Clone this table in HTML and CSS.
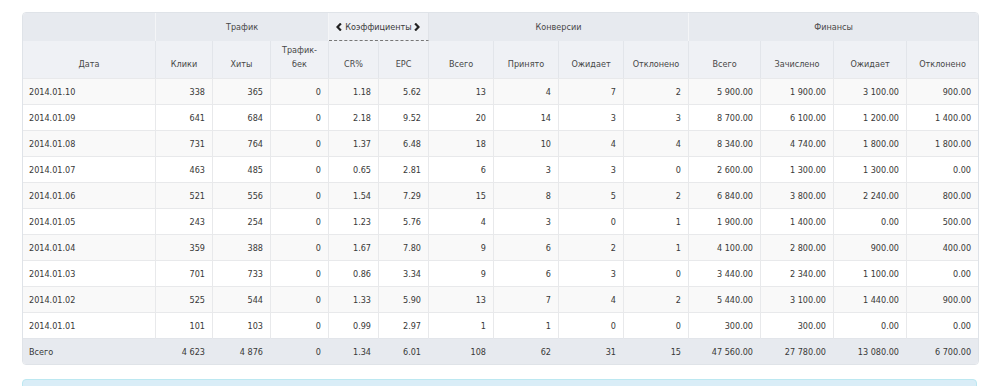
FILE: index.html
```html
<!DOCTYPE html>
<html lang="ru">
<head>
<meta charset="utf-8">
<title>Статистика</title>
<link rel="stylesheet" href="styles.css">
</head>
<body>
<div class="wrap">
<table class="stats">
<colgroup>
<col style="width:133px"><col style="width:57px"><col style="width:58px"><col style="width:58px">
<col style="width:50px"><col style="width:50px">
<col style="width:65px"><col style="width:65px"><col style="width:65px"><col style="width:65px">
<col style="width:72px"><col style="width:73px"><col style="width:73px"><col style="width:71px">
</colgroup>
<thead>
<tr class="group">
<th class="gl"></th>
<th colspan="3" class="gl">Трафик</th>
<th colspan="2" class="gl koef"><svg class="chev" viewBox="0 0 6 8" width="6" height="8"><path d="M4.9 0.5 L1.5 4 L4.9 7.5" fill="none" stroke="#222" stroke-width="2.2"/></svg>Коэффициенты<svg class="chev" viewBox="0 0 6 8" width="6" height="8"><path d="M1.1 0.5 L4.5 4 L1.1 7.5" fill="none" stroke="#222" stroke-width="2.2"/></svg></th>
<th colspan="4" class="gl">Конверсии</th>
<th colspan="4">Финансы</th>
</tr>
<tr class="cols">
<th>Дата</th><th>Клики</th><th>Хиты</th><th>Трафик-<br>бек</th>
<th>CR%</th><th>EPC</th>
<th>Всего</th><th>Принято</th><th>Ожидает</th><th>Отклонено</th>
<th>Всего</th><th>Зачислено</th><th>Ожидает</th><th class="last">Отклонено</th>
</tr>
</thead>
<tbody>
<tr><td>2014.01.10</td><td>338</td><td>365</td><td>0</td><td>1.18</td><td>5.62</td><td>13</td><td>4</td><td>7</td><td>2</td><td>5 900.00</td><td>1 900.00</td><td>3 100.00</td><td>900.00</td></tr>
<tr><td>2014.01.09</td><td>641</td><td>684</td><td>0</td><td>2.18</td><td>9.52</td><td>20</td><td>14</td><td>3</td><td>3</td><td>8 700.00</td><td>6 100.00</td><td>1 200.00</td><td>1 400.00</td></tr>
<tr><td>2014.01.08</td><td>731</td><td>764</td><td>0</td><td>1.37</td><td>6.48</td><td>18</td><td>10</td><td>4</td><td>4</td><td>8 340.00</td><td>4 740.00</td><td>1 800.00</td><td>1 800.00</td></tr>
<tr><td>2014.01.07</td><td>463</td><td>485</td><td>0</td><td>0.65</td><td>2.81</td><td>6</td><td>3</td><td>3</td><td>0</td><td>2 600.00</td><td>1 300.00</td><td>1 300.00</td><td>0.00</td></tr>
<tr><td>2014.01.06</td><td>521</td><td>556</td><td>0</td><td>1.54</td><td>7.29</td><td>15</td><td>8</td><td>5</td><td>2</td><td>6 840.00</td><td>3 800.00</td><td>2 240.00</td><td>800.00</td></tr>
<tr><td>2014.01.05</td><td>243</td><td>254</td><td>0</td><td>1.23</td><td>5.76</td><td>4</td><td>3</td><td>0</td><td>1</td><td>1 900.00</td><td>1 400.00</td><td>0.00</td><td>500.00</td></tr>
<tr><td>2014.01.04</td><td>359</td><td>388</td><td>0</td><td>1.67</td><td>7.80</td><td>9</td><td>6</td><td>2</td><td>1</td><td>4 100.00</td><td>2 800.00</td><td>900.00</td><td>400.00</td></tr>
<tr><td>2014.01.03</td><td>701</td><td>733</td><td>0</td><td>0.86</td><td>3.34</td><td>9</td><td>6</td><td>3</td><td>0</td><td>3 440.00</td><td>2 340.00</td><td>1 100.00</td><td>0.00</td></tr>
<tr><td>2014.01.02</td><td>525</td><td>544</td><td>0</td><td>1.33</td><td>5.90</td><td>13</td><td>7</td><td>4</td><td>2</td><td>5 440.00</td><td>3 100.00</td><td>1 440.00</td><td>900.00</td></tr>
<tr><td>2014.01.01</td><td>101</td><td>103</td><td>0</td><td>0.99</td><td>2.97</td><td>1</td><td>1</td><td>0</td><td>0</td><td>300.00</td><td>300.00</td><td>0.00</td><td>0.00</td></tr>
</tbody>
<tfoot>
<tr><td>Всего</td><td>4 623</td><td>4 876</td><td>0</td><td>1.34</td><td>6.01</td><td>108</td><td>62</td><td>31</td><td>15</td><td>47 560.00</td><td>27 780.00</td><td>13 080.00</td><td>6 700.00</td></tr>
</tfoot>
</table>
<div class="info"></div>
</div>
</body>
</html>
```
FILE: styles.css
```css
html, body {
  margin: 0;
  padding: 0;
  background: #fff;
}
body {
  font-family: "DejaVu Sans Condensed", "DejaVu Sans", sans-serif;
  font-stretch: condensed;
  font-size: 9px;
  color: #383838;
}
.wrap {
  padding: 12px 23px 0 22px;
}
.stats {
  width: 955px;
  table-layout: fixed;
  border-collapse: separate;
  border-spacing: 0;
  border: 1px solid #dfe3e8;
  border-radius: 4px;
  overflow: hidden;
}
.stats th {
  font-weight: normal;
  color: #474747;
  text-align: center;
  padding: 0 4px;
}
.group th {
  height: 27px;
  background: #e7eaef;
  vertical-align: middle;
}
.group th.gl {
  border-right: 1px solid #f4f5f7;
}
.group th.koef {
  background: #eef0f4;
  color: #3a3a3a;
  border-bottom: 1px dashed #777;
  border-right: 1px solid #e0e3e8;
  padding: 0;
  white-space: nowrap;
}
.chev {
  display: inline-block;
  vertical-align: -1px;
  margin: 0 3px 0 2px;
}
.cols th {
  height: 30px;
  background: #eff1f5;
  vertical-align: bottom;
  padding-bottom: 7px;
  line-height: 14px;
  border-right: 1px solid #e2e5ea;
}
.cols th.last {
  border-right: 0;
}
.stats td {
  height: 25px;
  padding: 0 7px 0 6px;
  text-align: right;
  vertical-align: middle;
  border-top: 1px solid #e8e9eb;
  border-right: 1px solid #e8e9eb;
  white-space: nowrap;
}
.stats td:first-child {
  text-align: left;
}
.stats td:last-child {
  border-right: 0;
}
.stats tbody tr:nth-child(odd) td {
  background: #f9f9f9;
}
.stats tbody tr:nth-child(even) td {
  background: #fff;
}
.stats tfoot td {
  background: #e7eaef;
  border-right-color: #e7eaef;
  border-top-color: #e2e5ea;
}
.info {
  margin-top: 14px;
  height: 30px;
  background: #d9edf7;
  border: 1px solid #bce8f1;
  border-radius: 4px;
}
```
